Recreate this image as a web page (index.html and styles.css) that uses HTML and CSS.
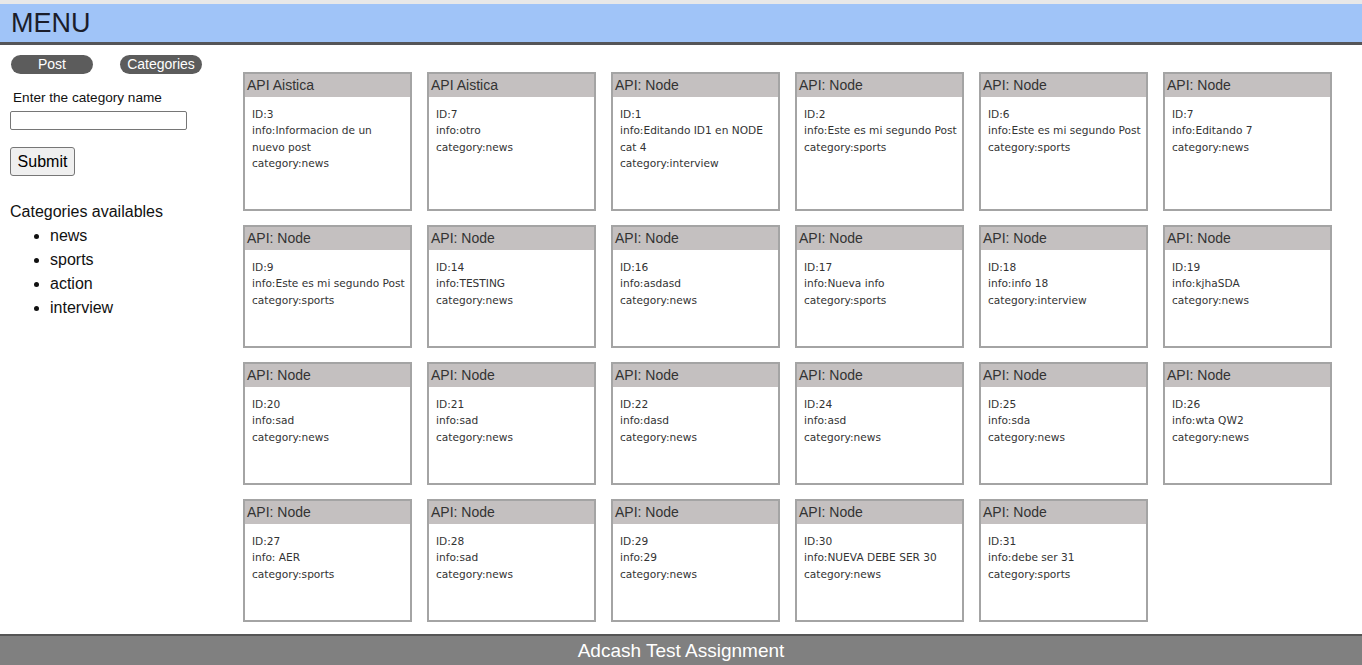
FILE: index.html
```html
<!DOCTYPE html>
<html>
<head>
<meta charset="utf-8">
<link rel="stylesheet" href="styles.css">
</head>
<body>
<div class="page">
  <header class="topbar"><h1 class="title">MENU</h1></header>
  <div class="layout">
    <aside class="sidebar">
      <nav class="tabs">
        <button class="pill">Post</button>
        <button class="pill">Categories</button>
      </nav>
      <form class="form">
        <label class="label">Enter the category name</label>
        <input class="input" type="text">
        <button class="submit" type="button">Submit</button>
      </form>
      <h2 class="cat-title">Categories availables</h2>
      <ul class="cat-list">
        <li>news</li>
        <li>sports</li>
        <li>action</li>
        <li>interview</li>
      </ul>
    </aside>
    <main class="grid">
      <div class="card"><div class="card-head">API Aistica</div><div class="card-body"><div>ID:3</div><div>info:Informacion de un nuevo post</div><div>category:news</div></div></div>
      <div class="card"><div class="card-head">API Aistica</div><div class="card-body"><div>ID:7</div><div>info:otro</div><div>category:news</div></div></div>
      <div class="card"><div class="card-head">API: Node</div><div class="card-body"><div>ID:1</div><div>info:Editando ID1 en NODE cat 4</div><div>category:interview</div></div></div>
      <div class="card"><div class="card-head">API: Node</div><div class="card-body"><div>ID:2</div><div>info:Este es mi segundo Post</div><div>category:sports</div></div></div>
      <div class="card"><div class="card-head">API: Node</div><div class="card-body"><div>ID:6</div><div>info:Este es mi segundo Post</div><div>category:sports</div></div></div>
      <div class="card"><div class="card-head">API: Node</div><div class="card-body"><div>ID:7</div><div>info:Editando 7</div><div>category:news</div></div></div>

      <div class="card"><div class="card-head">API: Node</div><div class="card-body"><div>ID:9</div><div>info:Este es mi segundo Post</div><div>category:sports</div></div></div>
      <div class="card"><div class="card-head">API: Node</div><div class="card-body"><div>ID:14</div><div>info:TESTING</div><div>category:news</div></div></div>
      <div class="card"><div class="card-head">API: Node</div><div class="card-body"><div>ID:16</div><div>info:asdasd</div><div>category:news</div></div></div>
      <div class="card"><div class="card-head">API: Node</div><div class="card-body"><div>ID:17</div><div>info:Nueva info</div><div>category:sports</div></div></div>
      <div class="card"><div class="card-head">API: Node</div><div class="card-body"><div>ID:18</div><div>info:info 18</div><div>category:interview</div></div></div>
      <div class="card"><div class="card-head">API: Node</div><div class="card-body"><div>ID:19</div><div>info:kjhaSDA</div><div>category:news</div></div></div>

      <div class="card"><div class="card-head">API: Node</div><div class="card-body"><div>ID:20</div><div>info:sad</div><div>category:news</div></div></div>
      <div class="card"><div class="card-head">API: Node</div><div class="card-body"><div>ID:21</div><div>info:sad</div><div>category:news</div></div></div>
      <div class="card"><div class="card-head">API: Node</div><div class="card-body"><div>ID:22</div><div>info:dasd</div><div>category:news</div></div></div>
      <div class="card"><div class="card-head">API: Node</div><div class="card-body"><div>ID:24</div><div>info:asd</div><div>category:news</div></div></div>
      <div class="card"><div class="card-head">API: Node</div><div class="card-body"><div>ID:25</div><div>info:sda</div><div>category:news</div></div></div>
      <div class="card"><div class="card-head">API: Node</div><div class="card-body"><div>ID:26</div><div>info:wta QW2</div><div>category:news</div></div></div>

      <div class="card"><div class="card-head">API: Node</div><div class="card-body"><div>ID:27</div><div>info: AER</div><div>category:sports</div></div></div>
      <div class="card"><div class="card-head">API: Node</div><div class="card-body"><div>ID:28</div><div>info:sad</div><div>category:news</div></div></div>
      <div class="card"><div class="card-head">API: Node</div><div class="card-body"><div>ID:29</div><div>info:29</div><div>category:news</div></div></div>
      <div class="card"><div class="card-head">API: Node</div><div class="card-body"><div>ID:30</div><div>info:NUEVA DEBE SER 30</div><div>category:news</div></div></div>
      <div class="card"><div class="card-head">API: Node</div><div class="card-body"><div>ID:31</div><div>info:debe ser 31</div><div>category:sports</div></div></div>
    </main>
  </div>
  <footer class="footer">Adcash Test Assignment</footer>
</div>
</body>
</html>
```

FILE: styles.css
```css
* { box-sizing: border-box; }
html, body { margin: 0; padding: 0; }
body {
  font-family: "Liberation Sans", Arial, sans-serif;
  color: #111;
  background: #fff;
}
.page {
  min-height: 100vh;
  display: flex;
  flex-direction: column;
  border-top: 4px solid #e8e8e8;
}
.topbar {
  background: #a0c4f8;
  height: 41px;
  border-bottom: 3px solid #555558;
  display: flex;
  align-items: center;
  padding-left: 11px;
}
.title {
  margin: 0;
  font-weight: normal;
  font-size: 27px;
  color: #1b1d2a;
  line-height: 1;
}
.layout {
  flex: 1;
  display: flex;
}
.sidebar {
  width: 243px;
  flex: none;
  padding: 10px 0 0 10px;
}
.tabs {
  display: flex;
  gap: 27px;
  padding-left: 1px;
}
.pill {
  width: 82px;
  height: 19px;
  border: none;
  border-radius: 10px;
  background: #5c5c5c;
  color: #fff;
  font-family: "Liberation Sans", Arial, sans-serif;
  font-size: 14px;
  padding: 0;
  line-height: 19px;
}
.form {
  display: flex;
  flex-direction: column;
  align-items: flex-start;
  margin-top: 16px;
}
.label {
  font-size: 13.6px;
  margin-left: 3px;
  line-height: 16px;
}
.input {
  margin-top: 5px;
  width: 177px;
  height: 19px;
  border: 1px solid #767676;
  border-radius: 2px;
  padding: 0 2px;
}
.submit {
  margin-top: 17px;
  height: 29px;
  width: 65px;
  padding: 0;
  font-family: "Liberation Sans", Arial, sans-serif;
  font-size: 16px;
  color: #000;
  background: #efefef;
  border: 1px solid #767676;
  border-radius: 3px;
}
.cat-title {
  margin: 27px 0 0;
  font-weight: normal;
  font-size: 16px;
  line-height: 18px;
  color: #111;
}
.cat-list {
  margin: 3px 0 0;
  padding-left: 40px;
  font-size: 16px;
  line-height: 24px;
}
.grid {
  display: grid;
  grid-template-columns: repeat(6, 169px);
  column-gap: 15px;
  row-gap: 14px;
  align-content: start;
  padding-top: 27px;
  padding-bottom: 10px;
}
.card {
  border: 2px solid #a4a4a4;
  background: #fff;
  display: flex;
  flex-direction: column;
}
.card-head {
  background: #c4c0c0;
  height: 23px;
  padding-left: 2px;
  font-size: 14px;
  line-height: 22px;
  color: #333;
}
.card-body {
  padding: 9px 3px 38px 7px;
  font-family: "DejaVu Sans", Verdana, sans-serif;
  font-size: 10.6px;
  line-height: 16.3px;
  color: #333;
}
.footer {
  background: #808080;
  border-top: 2px solid #555;
  height: 31px;
  color: #fff;
  font-size: 19px;
  text-align: center;
  line-height: 29px;
}
```
